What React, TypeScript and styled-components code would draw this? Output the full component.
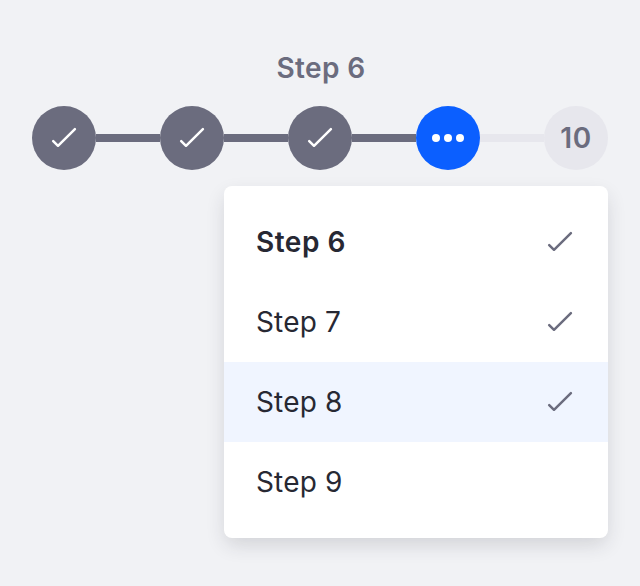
import React from "react";
import styled, { createGlobalStyle } from "styled-components";

const GlobalStyle = createGlobalStyle`
  body {
    margin: 0;
    background: #f1f2f5;
    font-family: Inter, "Liberation Sans", sans-serif;
    font-size: 28px;
    color: #272833;
  }
`;

const Page = styled.main`
  box-sizing: border-box;
  min-height: 586px;
  padding: 48px 32px;
  display: flex;
  flex-direction: column;
`;

const Title = styled.div`
  height: 58px;
  line-height: 40px;
  text-align: center;
  font-weight: 600;
  letter-spacing: 0.4px;
  padding-left: 2px;
  color: #6b6c7e;
`;

const Steps = styled.div`
  display: flex;
  align-items: center;
`;

type StepState = "done" | "active" | "pending";

const stepColors: Record<StepState, string> = {
  done: "#6b6c7e",
  active: "#0b5fff",
  pending: "#e7e7ed",
};

const Circle = styled.div<{ $state: StepState }>`
  flex: none;
  width: 64px;
  height: 64px;
  border-radius: 50%;
  display: flex;
  align-items: center;
  justify-content: center;
  font-weight: 600;
  line-height: 34px;
  letter-spacing: 0.7px;
  background: ${(p) => stepColors[p.$state]};
  color: ${(p) => (p.$state === "pending" ? "#6b6c7e" : "#fff")};
`;

const Connector = styled.div<{ $done: boolean }>`
  flex: 1;
  height: 8px;
  background: ${(p) => (p.$done ? "#6b6c7e" : "#e7e7ed")};
`;

const Menu = styled.ul`
  list-style: none;
  margin: 16px 0 0;
  padding: 16px 0;
  width: 384px;
  align-self: flex-end;
  background: #fff;
  border-radius: 8px;
  box-shadow: 0 8px 20px -2px rgba(39, 40, 51, 0.16);
`;

const Item = styled.li<{ $bold?: boolean; $highlighted?: boolean }>`
  height: 80px;
  padding: 0 32px;
  display: flex;
  align-items: center;
  justify-content: space-between;
  line-height: 34px;
  letter-spacing: ${(p) => (p.$bold ? "0.5px" : "0.15px")};
  font-weight: ${(p) => (p.$bold ? 600 : 400)};
  background: ${(p) => (p.$highlighted ? "#f0f5ff" : "transparent")};
`;

const Icon = styled.svg`
  display: block;
  width: 32px;
  height: 32px;
`;

const MenuIcon = styled(Icon)`
  color: #6b6c7e;
`;

const checkPath = "M5.2 19.1l4.8 4.7L26.9 7.2";

const items = [
  { label: "Step 6", done: true, bold: true },
  { label: "Step 7", done: true },
  { label: "Step 8", done: true, highlighted: true },
  { label: "Step 9", done: false },
];

function CheckShape() {
  return (
    <path
      d={checkPath}
      fill="none"
      stroke="currentColor"
      strokeWidth="2.5"
      strokeLinecap="round"
      strokeLinejoin="round"
    />
  );
}

function DoneStep() {
  return (
    <>
      <Circle $state="done">
        <Icon viewBox="0 0 32 32">
          <CheckShape />
        </Icon>
      </Circle>
      <Connector $done />
    </>
  );
}

export default function App() {
  return (
    <Page>
      <GlobalStyle />
      <Title>Step 6</Title>
      <Steps>
        <DoneStep />
        <DoneStep />
        <DoneStep />
        <Circle $state="active">
          <Icon viewBox="0 0 32 32" fill="currentColor">
            <circle cx="4" cy="16" r="4" />
            <circle cx="16" cy="16" r="4" />
            <circle cx="28" cy="16" r="4" />
          </Icon>
        </Circle>
        <Connector $done={false} />
        <Circle $state="pending">10</Circle>
      </Steps>
      <Menu>
        {items.map((item) => (
          <Item key={item.label} $bold={item.bold} $highlighted={item.highlighted}>
            <span>{item.label}</span>
            {item.done && (
              <MenuIcon viewBox="0 0 32 32">
                <CheckShape />
              </MenuIcon>
            )}
          </Item>
        ))}
      </Menu>
    </Page>
  );
}
